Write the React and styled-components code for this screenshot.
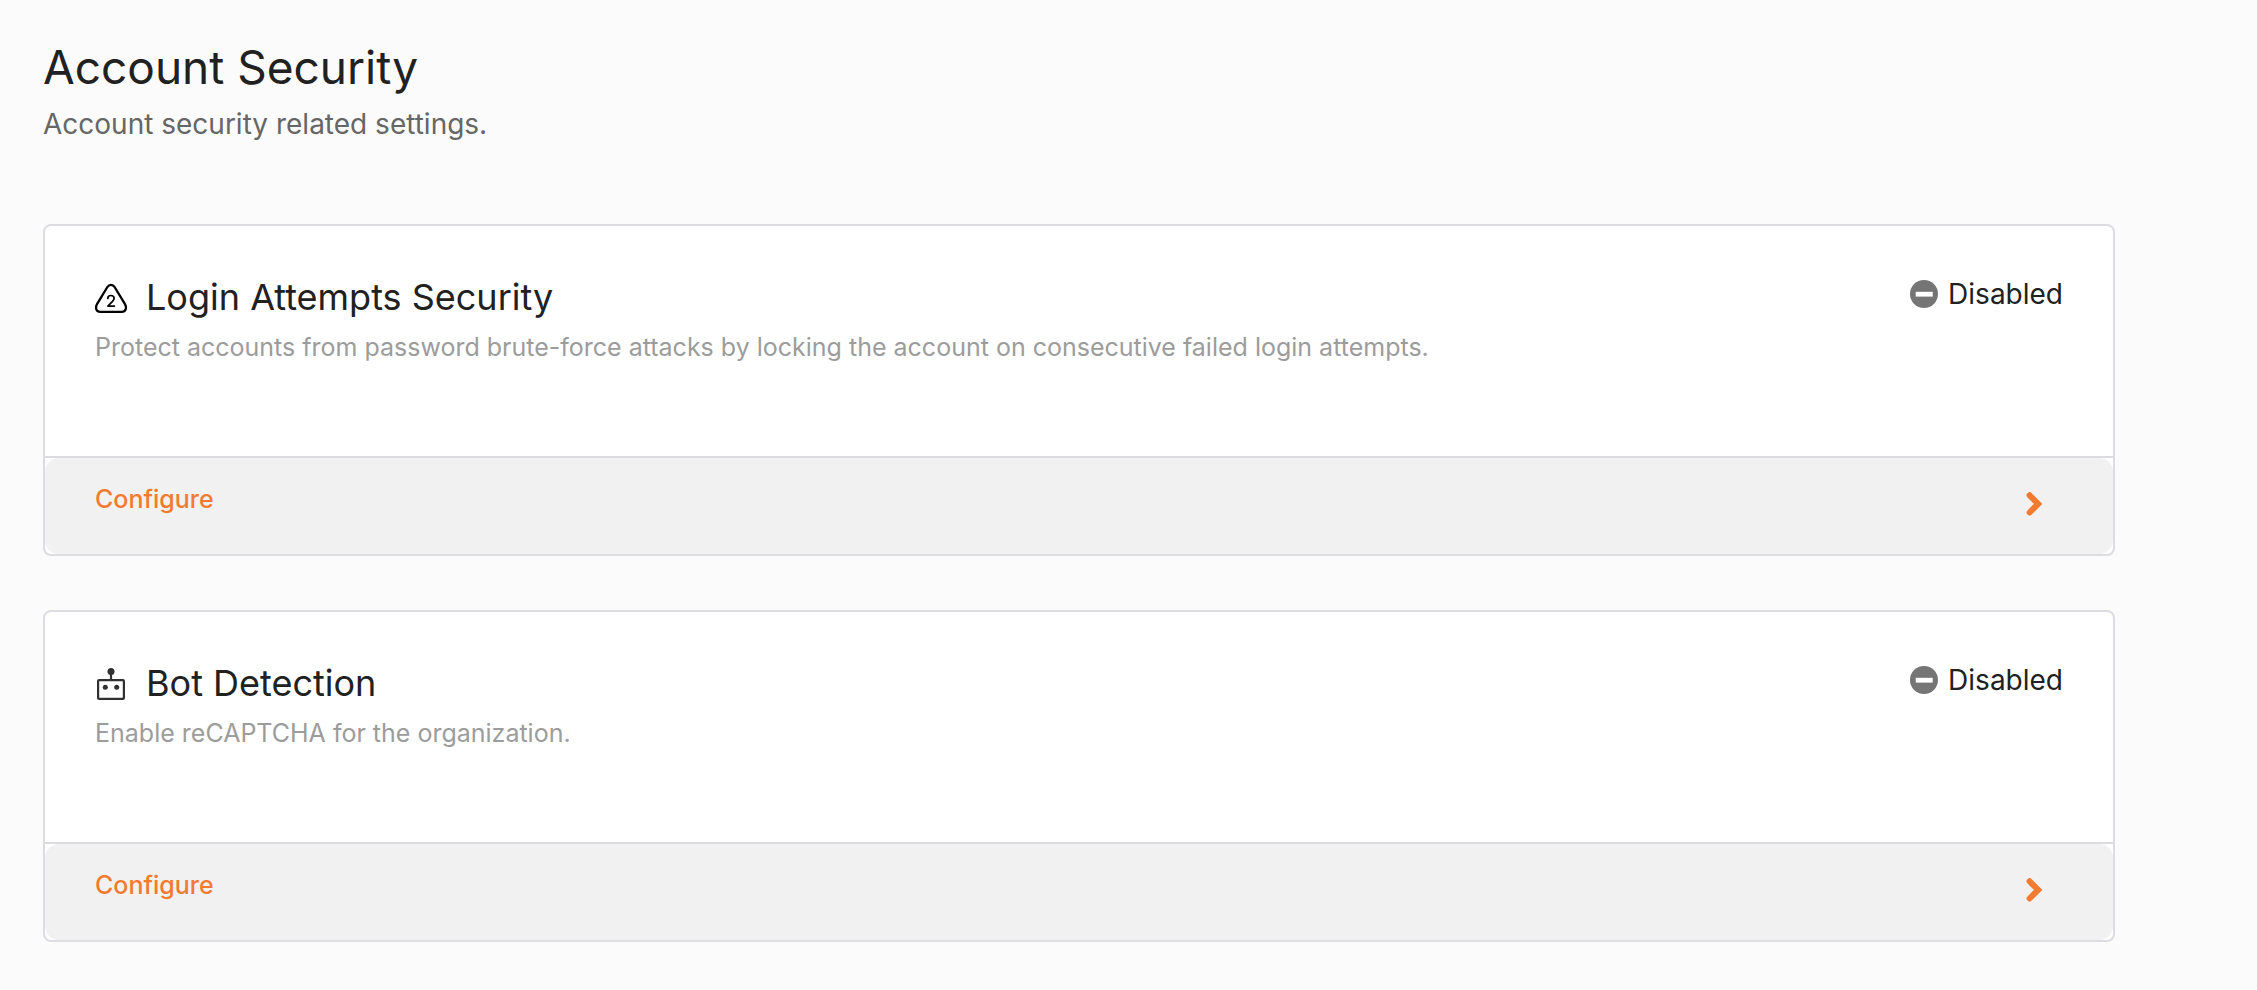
import React from "react";
import styled, { createGlobalStyle } from "styled-components";

const GlobalStyle = createGlobalStyle`
  * { box-sizing: border-box; }
  body {
    margin: 0;
    background: #fbfbfb;
    color: #212121;
    font-family: Inter, "Liberation Sans", sans-serif;
  }
`;

const Page = styled.main`
  padding: 36px 142px 48px 43px;
`;

const PageHeader = styled.header`
  display: flex;
  flex-direction: column;
  gap: 6px;
  margin-bottom: 80px;
`;

const Title = styled.h1`
  margin: 0;
  font-size: 46px;
  line-height: 62px;
  font-weight: 400;
`;

const Subtitle = styled.p`
  margin: 0;
  font-size: 28px;
  line-height: 40px;
  color: #666;
`;

const CardList = styled.div`
  display: flex;
  flex-direction: column;
  gap: 54px;
`;

const Card = styled.section`
  background: #fff;
  border: 2px solid #dcdce1;
  border-radius: 8px;
`;

const CardBody = styled.div`
  display: flex;
  align-items: flex-start;
  justify-content: space-between;
  padding: 46px 50px 90px;
`;

const CardText = styled.div`
  display: flex;
  flex-direction: column;
  gap: 6px;
`;

const CardHeading = styled.div`
  display: flex;
  align-items: center;
  gap: 19px;
`;

const CardTitle = styled.h2`
  margin: 0;
  font-size: 36px;
  line-height: 50px;
  font-weight: 400;
`;

const CardDescription = styled.p`
  margin: 0;
  font-size: 25px;
  line-height: 38px;
  color: #9c9c9c;
`;

const Status = styled.div`
  display: flex;
  align-items: center;
  gap: 10px;
  flex-shrink: 0;
  font-size: 28px;
  line-height: 44px;
`;

const CardFooter = styled.a`
  display: flex;
  align-items: flex-end;
  justify-content: space-between;
  padding: 22px 71px 36px 50px;
  border-radius: 14px;
  background: #f1f1f1;
  color: #f27b2f;
  font-size: 25px;
  line-height: 38px;
  font-weight: 500;
  text-decoration: none;
`;

const Divider = styled.hr`
  height: 2px;
  margin: 0;
  border: 0;
  background: #dcdce0;
`;

const TriangleIcon = () => (
  <svg width="32" height="38" viewBox="0 1 32 38" fill="none" stroke="#000" strokeWidth="2.3" strokeLinecap="round" strokeLinejoin="round" aria-hidden="true">
    <path d="M12.4 10 2 27.2C0 30.8 1.2 34.8 5.2 34.8H26.8C30.8 34.8 32 30.8 30 27.2L19.6 10C17.8 7.1 14.2 7.1 12.4 10Z" />
    <path strokeWidth="1.7" d="M12.8 21.4C12.8 19.6 14.1 18.5 15.9 18.5C17.9 18.5 19.1 19.6 19.1 21.3C19.1 22.5 18.5 23.3 17.5 24.4L12.9 29.1H19.4" />
  </svg>
);

const RobotIcon = () => (
  <svg width="32" height="38" viewBox="0 1 32 38" fill="none" aria-hidden="true">
    <rect x="3.1" y="17.1" width="25.8" height="18.8" rx="1" stroke="#303030" strokeWidth="2.2" />
    <path d="M16 8V17" stroke="#303030" strokeWidth="2.2" />
    <circle cx="16" cy="8.4" r="3.5" fill="#303030" />
    <circle cx="10.3" cy="24.3" r="2.5" fill="#303030" />
    <circle cx="21.7" cy="24.3" r="2.5" fill="#303030" />
  </svg>
);

const MinusCircleIcon = () => (
  <svg width="28" height="28" viewBox="0 0 28 28" aria-hidden="true">
    <circle cx="14" cy="14" r="14" fill="#757575" />
    <rect x="5.7" y="11.8" width="17" height="4.8" fill="#fff" />
  </svg>
);

const ChevronIcon = () => (
  <svg width="16" height="26" viewBox="0 0 16 26" fill="none" aria-hidden="true">
    <path d="M3.6 3.3 12.2 11.9 3.6 20.5" stroke="#f27b2f" strokeWidth="6" strokeLinecap="round" strokeLinejoin="miter" />
  </svg>
);

const settings = [
  {
    id: "login-attempts",
    Icon: TriangleIcon,
    title: "Login Attempts Security",
    description:
      "Protect accounts from password brute-force attacks by locking the account on consecutive failed login attempts.",
  },
  {
    id: "bot-detection",
    Icon: RobotIcon,
    title: "Bot Detection",
    description: "Enable reCAPTCHA for the organization.",
  },
];

export default function App() {
  return (
    <>
      <GlobalStyle />
      <Page>
        <PageHeader>
          <Title>Account Security</Title>
          <Subtitle>Account security related settings.</Subtitle>
        </PageHeader>
        <CardList>
          {settings.map(({ id, Icon, title, description }) => (
            <Card key={id} aria-labelledby={id}>
              <CardBody>
                <CardText>
                  <CardHeading>
                    <Icon />
                    <CardTitle id={id}>{title}</CardTitle>
                  </CardHeading>
                  <CardDescription>{description}</CardDescription>
                </CardText>
                <Status>
                  <MinusCircleIcon />
                  Disabled
                </Status>
              </CardBody>
              <Divider />
              <CardFooter href={`#${id}`}>
                Configure
                <ChevronIcon />
              </CardFooter>
            </Card>
          ))}
        </CardList>
      </Page>
    </>
  );
}
